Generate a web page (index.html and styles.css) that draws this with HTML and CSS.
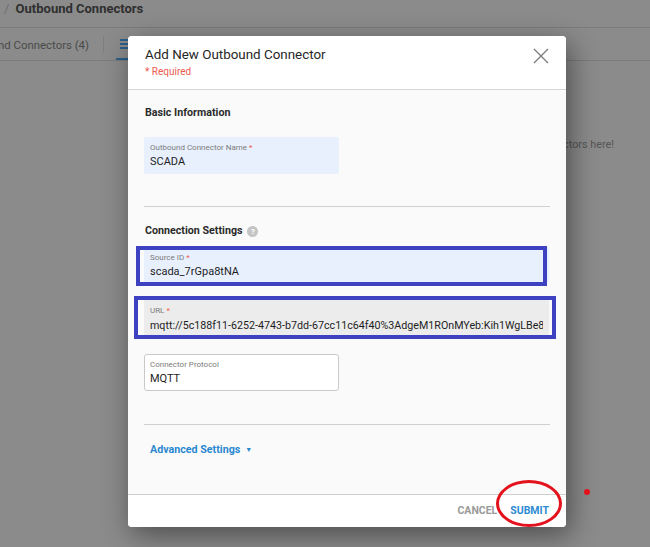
FILE: index.html
```html
<!DOCTYPE html>
<html>
<head>
<meta charset="utf-8">
<link rel="stylesheet" href="styles.css">
</head>
<body>
<div class="page">
  <div class="crumbs"><span class="slash">/</span> Outbound Connectors</div>
  <div class="tabs">
    <div class="tab first">Outbound Connectors (4)</div>
    <div class="tab-sep"></div>
    <div class="tab active">
      <svg width="9" height="10" viewBox="0 0 9 10"><rect x="0" y="0" width="9" height="2" fill="#2a5f8a"/><rect x="0" y="4" width="9" height="2" fill="#2a5f8a"/><rect x="0" y="8" width="9" height="2" fill="#2a5f8a"/></svg>
    </div>
  </div>
  <div class="empty">Drag outbound connectors here!</div>
</div>

<div class="modal">
  <div class="modal-head">
    <div>
      <div class="modal-title">Add New Outbound Connector</div>
      <div class="required">* Required</div>
    </div>
    <svg class="close" width="16" height="16" viewBox="0 0 16 16"><path d="M1 1L15 15M15 1L1 15" stroke="#7a7a7a" stroke-width="1.3" fill="none"/></svg>
  </div>
  <div class="modal-body">
    <div class="section-title">Basic Information</div>
    <div class="field half filled name">
      <div class="label">Outbound Connector Name<span class="star">*</span></div>
      <div class="value">SCADA</div>
    </div>
    <div class="divider first-div"></div>
    <div class="section-title row">Connection Settings <span class="help">?</span></div>
    <div class="field full filled src">
      <div class="label">Source ID<span class="star">*</span></div>
      <div class="value">scada_7rGpa8tNA</div>
    </div>
    <div class="field full disabled url">
      <div class="label">URL<span class="star">*</span></div>
      <div class="value clip">mqtt://5c188f11-6252-4743-b7dd-67cc11c64f40%3AdgeM1ROnMYeb:Kih1WgLBe8:JHk2</div>
    </div>
    <div class="field half outlined">
      <div class="label">Connector Protocol</div>
      <div class="value">MQTT</div>
    </div>
    <div class="divider second-div"></div>
    <div class="advanced">Advanced Settings <span class="caret">&#9660;</span></div>
  </div>
  <div class="modal-foot">
    <span class="btn cancel">CANCEL</span>
    <span class="btn submit">SUBMIT</span>
  </div>
  <div class="mark mark-src"></div>
  <div class="mark mark-url"></div>
</div>

<div class="ring"></div>
<div class="dot"></div>
</body>
</html>
```

FILE: styles.css
```css
html, body {
  margin: 0;
  padding: 0;
}
body {
  width: 650px;
  height: 547px;
  overflow: hidden;
  background: #8b8b8b;
  font-family: Roboto, "Noto Sans", "Liberation Sans", sans-serif;
  position: relative;
}
.page {
  display: flex;
  flex-direction: column;
}
.crumbs {
  border-bottom: 1px solid #7b7b7b;
  padding-left: 4px;
  font-size: 13px;
  font-weight: 700;
  color: #2f2f2f;
  line-height: 18px;
  box-sizing: border-box;
  height: 28px;
}
.crumbs .slash {
  color: #6e6e6e;
  font-weight: 400;
  margin-right: 3px;
}
.tabs {
  height: 33px;
  border-bottom: 1px solid #7b7b7b;
  box-sizing: border-box;
  display: flex;
  align-items: stretch;
  overflow: hidden;
}
.tab {
  font-size: 11.4px;
  color: #4a4a4a;
  display: flex;
  align-items: center;
}
.tab.first {
  margin-left: -39px;
  padding-top: 1px;
}
.tab-sep {
  width: 1px;
  height: 17px;
  background: #7e7e7e;
  align-self: center;
  margin-left: 14px;
}
.tab.active {
  margin-left: 12px;
  width: 16px;
  justify-content: center;
  border-bottom: 2px solid #2a5f8a;
  box-sizing: border-box;
  padding-top: 2px;
}
.empty {
  margin-top: 77px;
  align-self: flex-end;
  padding-right: 36px;
  font-size: 10.8px;
  color: #555;
}

.modal {
  position: absolute;
  left: 128px;
  top: 36px;
  width: 438px;
  height: 491px;
  background: #fafafa;
  border-radius: 4px;
  box-shadow: 4px 8px 28px rgba(0,0,0,0.45);
  display: flex;
  flex-direction: column;
  overflow: hidden;
}
.modal-head {
  background: #fff;
  height: 54px;
  box-sizing: border-box;
  border-bottom: 1px solid #d6d6d6;
  padding: 10px 17px 0 17px;
  display: flex;
  justify-content: space-between;
  align-items: flex-start;
}
.modal-title {
  font-size: 13.4px;
  color: #262626;
  line-height: 17px;
}
.required {
  font-size: 10px;
  color: #ec5a4e;
  margin-top: 3px;
}
.close {
  margin-top: 2px;
}
.modal-body {
  flex: 1;
  padding: 16px 17px 0 16px;
  display: flex;
  flex-direction: column;
  align-items: flex-start;
}
.section-title {
  font-size: 10.7px;
  font-weight: 700;
  color: #2a2a2a;
  line-height: 14px;
  padding-left: 1px;
}
.section-title.row {
  display: flex;
  align-items: center;
  margin-top: 17px;
}
.help {
  display: inline-flex;
  width: 11px;
  height: 11px;
  border-radius: 50%;
  background: #c4c4c4;
  color: #fff;
  font-size: 8px;
  align-items: center;
  justify-content: center;
  margin-left: 5px;
  margin-top: 1px;
}
.field {
  box-sizing: border-box;
  height: 37px;
  padding: 6px 6px 0 6px;
  border-radius: 2px;
  overflow: hidden;
}
.field.half { width: 195px; }
.field.full { width: 405px; }
.field.filled { background: #e8f0fe; }
.field.disabled { background: #ececec; }
.field.outlined {
  background: #fff;
  border: 1px solid #c9c9c9;
  border-radius: 3px;
  padding: 5px 5px 0 5px;
  margin-top: 17px;
}
.label {
  font-size: 8px;
  color: #7b7b7b;
  line-height: 9px;
}
.star {
  color: #ec5a4e;
  margin-left: 2px;
}
.value {
  font-size: 11px;
  color: #1e1e1e;
  margin-top: 3px;
  line-height: 14px;
  white-space: nowrap;
}
.value.clip {
  overflow: hidden;
  font-size: 10.7px;
}
.field.name { margin-top: 17px; }
.first-div { margin-top: 32px; }
.divider {
  width: 406px;
  height: 1px;
  background: #d0d0d0;
}
.field.src { margin-top: 9px; height: 36px; }
.field.url { margin-top: 14px; height: 40px; padding-top: 9px; }
.field.url .value { margin-top: 4px; }
.second-div { margin-top: 33px; }
.advanced {
  margin-top: 18px;
  margin-left: 6px;
  font-size: 10.7px;
  font-weight: 700;
  color: #2b88d0;
  display: flex;
  align-items: center;
}
.caret {
  font-size: 7px;
  margin-left: 5px;
  margin-top: 1px;
}
.modal-foot {
  background: #fff;
  height: 33px;
  box-sizing: border-box;
  border-top: 1px solid #d0d0d0;
  display: flex;
  justify-content: flex-end;
  align-items: center;
  padding: 0 17px 1px 0;
  gap: 13px;
}
.btn {
  font-size: 10.5px;
  font-weight: 700;
}
.cancel { color: #9a9a9a; }
.submit { color: #2d8bd3; }

.mark {
  position: absolute;
  border: 4px solid #3f42c0;
  box-sizing: border-box;
}
.mark-src {
  left: 8px;
  top: 210px;
  width: 411px;
  height: 40px;
}
.mark-url {
  left: 6px;
  top: 260px;
  width: 422px;
  height: 43px;
}
.ring {
  position: absolute;
  left: 496px;
  top: 480px;
  width: 66px;
  height: 47px;
  box-sizing: border-box;
  border: 3.5px solid #e3121c;
  border-radius: 50%;
}
.dot {
  position: absolute;
  left: 584px;
  top: 489px;
  width: 6px;
  height: 6px;
  border-radius: 50%;
  background: #e3121c;
}
```
